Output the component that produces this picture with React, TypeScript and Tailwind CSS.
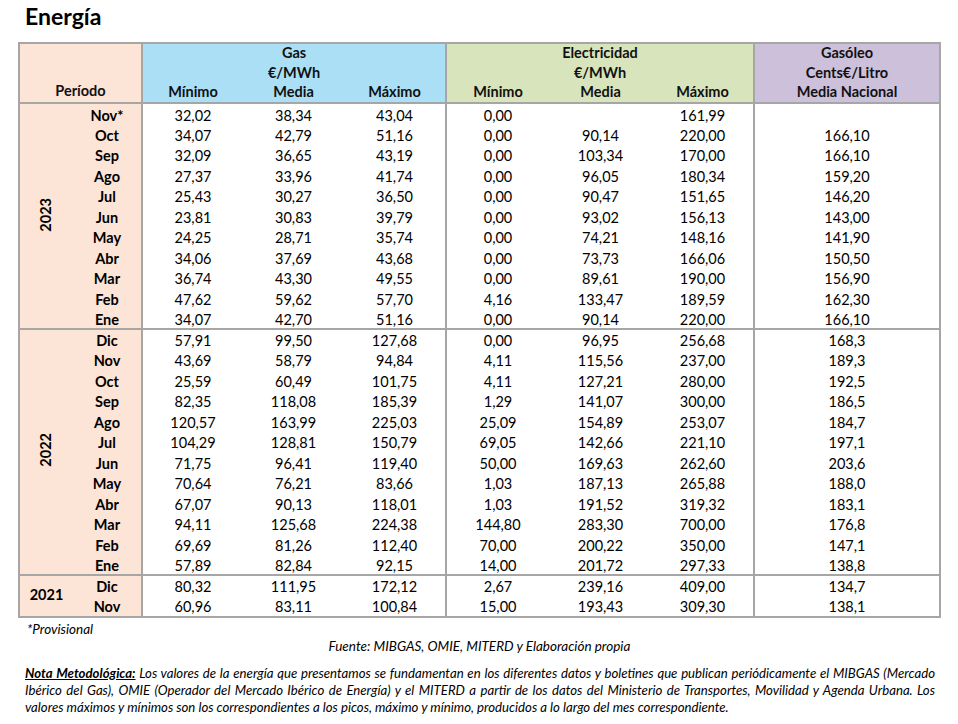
import React from "react";

type Row = [string, string, string, string, string, string, string, string];

const y2023: Row[] = [
  ["Nov*", "32,02", "38,34", "43,04", "0,00", "", "161,99", ""],
  ["Oct", "34,07", "42,79", "51,16", "0,00", "90,14", "220,00", "166,10"],
  ["Sep", "32,09", "36,65", "43,19", "0,00", "103,34", "170,00", "166,10"],
  ["Ago", "27,37", "33,96", "41,74", "0,00", "96,05", "180,34", "159,20"],
  ["Jul", "25,43", "30,27", "36,50", "0,00", "90,47", "151,65", "146,20"],
  ["Jun", "23,81", "30,83", "39,79", "0,00", "93,02", "156,13", "143,00"],
  ["May", "24,25", "28,71", "35,74", "0,00", "74,21", "148,16", "141,90"],
  ["Abr", "34,06", "37,69", "43,68", "0,00", "73,73", "166,06", "150,50"],
  ["Mar", "36,74", "43,30", "49,55", "0,00", "89,61", "190,00", "156,90"],
  ["Feb", "47,62", "59,62", "57,70", "4,16", "133,47", "189,59", "162,30"],
  ["Ene", "34,07", "42,70", "51,16", "0,00", "90,14", "220,00", "166,10"],
];

const y2022: Row[] = [
  ["Dic", "57,91", "99,50", "127,68", "0,00", "96,95", "256,68", "168,3"],
  ["Nov", "43,69", "58,79", "94,84", "4,11", "115,56", "237,00", "189,3"],
  ["Oct", "25,59", "60,49", "101,75", "4,11", "127,21", "280,00", "192,5"],
  ["Sep", "82,35", "118,08", "185,39", "1,29", "141,07", "300,00", "186,5"],
  ["Ago", "120,57", "163,99", "225,03", "25,09", "154,89", "253,07", "184,7"],
  ["Jul", "104,29", "128,81", "150,79", "69,05", "142,66", "221,10", "197,1"],
  ["Jun", "71,75", "96,41", "119,40", "50,00", "169,63", "262,60", "203,6"],
  ["May", "70,64", "76,21", "83,66", "1,03", "187,13", "265,88", "188,0"],
  ["Abr", "67,07", "90,13", "118,01", "1,03", "191,52", "319,32", "183,1"],
  ["Mar", "94,11", "125,68", "224,38", "144,80", "283,30", "700,00", "176,8"],
  ["Feb", "69,69", "81,26", "112,40", "70,00", "200,22", "350,00", "147,1"],
  ["Ene", "57,89", "82,84", "92,15", "14,00", "201,72", "297,33", "138,8"],
];

const y2021: Row[] = [
  ["Dic", "80,32", "111,95", "172,12", "2,67", "239,16", "409,00", "134,7"],
  ["Nov", "60,96", "83,11", "100,84", "15,00", "193,43", "309,30", "138,1"],
];

const B = "border-[#a6a6a6]";

function Group({ year, rows, vertical }: { year: string; rows: Row[]; vertical: boolean }) {
  return (
    <tbody className={`border-b-2 ${B}`}>
      {rows.map((r, i) => (
        <tr key={i} className={rows.length === 2 ? "h-[21px]" : "h-[20.5px]"}>
          {i === 0 && (
            <td rowSpan={rows.length} className="bg-[#fce4d6] p-0 text-center align-middle font-bold">
              {vertical ? (
                <span className="inline-block rotate-180 [writing-mode:vertical-rl] leading-none">{year}</span>
              ) : (
                <span>{year}</span>
              )}
            </td>
          )}
          <td className="bg-[#fce4d6] p-0 pt-[4px] text-center font-bold">{r[0]}</td>
          <td className={`border-l-2 ${B} p-0 pt-[4px] text-center`}>{r[1]}</td>
          <td className="p-0 pt-[4px] text-center">{r[2]}</td>
          <td className="p-0 pt-[4px] text-center">{r[3]}</td>
          <td className={`border-l-2 ${B} p-0 pt-[4px] text-center`}>{r[4]}</td>
          <td className="p-0 pt-[4px] text-center">{r[5]}</td>
          <td className="p-0 pt-[4px] text-center">{r[6]}</td>
          <td className={`border-l-2 ${B} p-0 pt-[4px] text-center`}>{r[7]}</td>
        </tr>
      ))}
    </tbody>
  );
}

export default function App() {
  return (
    <div
      className="w-[958px] h-[724px] bg-white overflow-hidden text-black"
      style={{ fontFamily: "Lato, 'Open Sans', sans-serif" }}
    >
      <h1 className="pl-[25px] pt-[2px] text-[23px] font-bold leading-[28px]">Energía</h1>
      <table className={`mt-[12px] ml-[18px] w-[921px] table-fixed border-collapse border-2 ${B} text-[14.5px] leading-none`}>
        <colgroup>
          <col className="w-[54px]" />
          <col className="w-[69px]" />
          <col className="w-[101px]" />
          <col className="w-[101px]" />
          <col className="w-[102px]" />
          <col className="w-[103px]" />
          <col className="w-[103px]" />
          <col className="w-[102px]" />
          <col className="w-[186px]" />
        </colgroup>
        <thead className={`border-b-2 ${B} font-bold text-[#111]`}>
          <tr className="h-[20px]">
            <td colSpan={2} rowSpan={3} className="bg-[#fce4d6] p-0 pb-[4px] text-center align-bottom">
              Período
            </td>
            <td colSpan={3} className={`bg-[#abdff5] border-l-2 ${B} p-0 text-center`}>Gas</td>
            <td colSpan={3} className={`bg-[#d8e4bc] border-l-2 ${B} p-0 text-center`}>Electricidad</td>
            <td className={`bg-[#ccc0da] border-l-2 ${B} p-0 text-center`}>Gasóleo</td>
          </tr>
          <tr className="h-[20px]">
            <td colSpan={3} className={`bg-[#abdff5] border-l-2 ${B} p-0 text-center`}>€/MWh</td>
            <td colSpan={3} className={`bg-[#d8e4bc] border-l-2 ${B} p-0 text-center`}>€/MWh</td>
            <td className={`bg-[#ccc0da] border-l-2 ${B} p-0 text-center`}>Cents€/Litro</td>
          </tr>
          <tr className="h-[20px]">
            <td className={`bg-[#abdff5] border-l-2 ${B} p-0 text-center`}>Mínimo</td>
            <td className="bg-[#abdff5] p-0 text-center">Media</td>
            <td className="bg-[#abdff5] p-0 text-center">Máximo</td>
            <td className={`bg-[#d8e4bc] border-l-2 ${B} p-0 text-center`}>Mínimo</td>
            <td className="bg-[#d8e4bc] p-0 text-center">Media</td>
            <td className="bg-[#d8e4bc] p-0 text-center">Máximo</td>
            <td className={`bg-[#ccc0da] border-l-2 ${B} p-0 text-center`}>Media Nacional</td>
          </tr>
        </thead>
        <Group year="2023" rows={y2023} vertical />
        <Group year="2022" rows={y2022} vertical />
        <Group year="2021" rows={y2021} vertical={false} />
      </table>
      <div className="pl-[27px] pt-[3px] text-[13.5px] italic leading-[16px]">*Provisional</div>
      <div className="pl-[1px] text-center text-[13.5px] italic leading-[18px]">
        Fuente: MIBGAS, OMIE, MITERD y Elaboración propia
      </div>
      <div className="mt-[10px] ml-[25px] w-[910px] text-[13.2px] italic leading-[17px]">
        <div className="whitespace-nowrap text-justify [text-align-last:justify]">
          <span className="font-bold underline">Nota Metodológica:</span> Los valores de la energía que presentamos se
          fundamentan en los diferentes datos y boletines que publican periódicamente el MIBGAS (Mercado
        </div>
        <div className="whitespace-nowrap text-justify [text-align-last:justify]">
          Ibérico del Gas), OMIE (Operador del Mercado Ibérico de Energía) y el MITERD a partir de los datos del
          Ministerio de Transportes, Movilidad y Agenda Urbana. Los
        </div>
        <div className="whitespace-nowrap">
          valores máximos y mínimos son los correspondientes a los picos, máximo y mínimo, producidos a lo largo del mes
          correspondiente.
        </div>
      </div>
    </div>
  );
}
